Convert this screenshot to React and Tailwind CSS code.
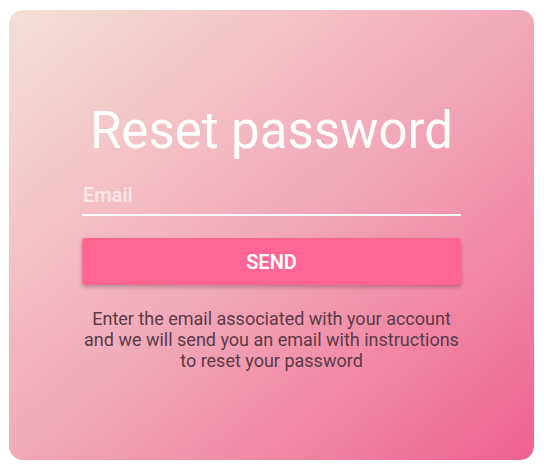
export default function App() {
  return (
    <div className="w-[544px] h-[469px] bg-white pt-[10px] pl-[9px]" style={{ fontFamily: 'Roboto, "Noto Sans", sans-serif' }}>
      <div className="w-[525px] h-[450px] rounded-[14px] bg-linear-to-br from-[#f4e0d6] via-[#f1a9ba] to-[#ee6090] px-[73px] pt-[96px] flex flex-col">
        <h1 className="text-white text-[51px] leading-[50px] text-center font-normal">Reset password</h1>
        <div className="mt-[27px] border-b-2 border-white/95 pb-[5px]">
          <input
            type="email"
            placeholder="Email"
            className="w-full bg-transparent outline-none text-[20px] leading-[24px] font-semibold text-white placeholder:text-white/60 pl-[1px]"
          />
        </div>
        <button className="mt-[22px] h-[47px] w-full rounded-[4px] bg-[#ff6694] text-white text-[20px] font-semibold shadow-[0_2px_4px_rgba(0,0,0,0.25)] flex items-center justify-center">
          SEND
        </button>
        <p className="mt-[23px] px-[2px] text-center text-[18px] leading-[21px] text-[#5c3a47]">
          Enter the email associated with your account and we will send you an email with instructions to reset your password
        </p>
      </div>
    </div>
  );
}
